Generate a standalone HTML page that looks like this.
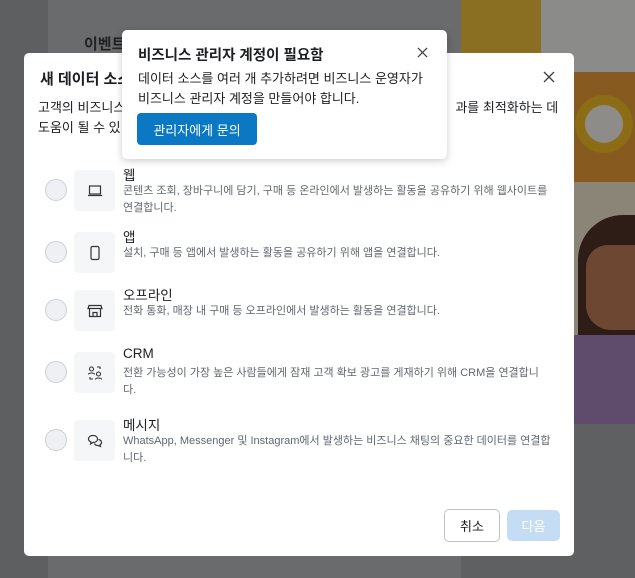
<!DOCTYPE html>
<html><head><meta charset="utf-8"><style>
*{margin:0;padding:0;box-sizing:border-box}
body{width:635px;height:578px;overflow:hidden;position:relative;background:#5f6061;font-family:"Liberation Sans","Noto Sans CJK KR",sans-serif;color:#1c1e21}
.abs{position:absolute}
.modal{left:24px;top:53px;width:550px;height:503px;background:#fff;border-radius:5px}
.pop{left:122px;top:30px;width:325px;height:129px;background:#fff;border-radius:5px;box-shadow:0 2px 8px rgba(0,0,0,.2)}
.row{position:absolute;left:0;width:550px;height:60px}
.radio{position:absolute;left:21px;top:9px;width:22px;height:22px;border-radius:50%;border:1px solid #ccd0d5;background:#eef0f4}
.ico{position:absolute;left:50px;top:0;width:41px;height:41px;background:#f5f6f7;border-radius:4px;display:flex;align-items:center;justify-content:center}
.t{position:absolute;left:99px;top:-6px;font-size:13.5px;color:#1c1e21}
.d{position:absolute;left:99px;top:13px;font-size:11px;color:#606770;line-height:17px;width:428px}
</style></head><body>
<div class="abs" style="left:0;top:0;width:48px;height:578px;background:#5e5f60"></div>
<div class="abs" style="left:48px;top:0;width:413px;height:578px;background:#6a6b6c"></div>
<div class="abs" style="left:84px;top:33px;font-size:15px;font-weight:bold;color:#222">이벤트</div>
<div class="abs" style="left:461px;top:0;width:174px;height:424px;background:#8a8577"></div>
<div class="abs" style="left:461px;top:0;width:80px;height:75px;background:#8a6f22"></div>
<div class="abs" style="left:541px;top:0;width:94px;height:72px;background:#8b8b89"></div>
<div class="abs" style="left:541px;top:72px;width:94px;height:110px;background:#875a20"></div>
<div class="abs" style="left:575px;top:95px;width:58px;height:58px;border-radius:50%;background:#8c6c14"></div>
<div class="abs" style="left:585px;top:105px;width:38px;height:38px;border-radius:50%;background:#8e8c88"></div>
<div class="abs" style="left:578px;top:215px;width:57px;height:170px;background:#2e1c16;border-radius:45px 0 0 0"></div>
<div class="abs" style="left:586px;top:245px;width:49px;height:85px;background:#6e4732;border-radius:22px 0 0 25px"></div>
<div class="abs" style="left:574px;top:335px;width:61px;height:89px;background:#5f4c6c"></div>
<div class="abs" style="left:574px;top:424px;width:61px;height:154px;background:#5e6061"></div>

<div class="abs modal">
  <div class="abs" style="left:16px;top:15px;font-size:15px;font-weight:bold">새 데이터 소스</div>
  <svg class="abs" style="left:519px;top:18px" width="12" height="12" viewBox="0 0 12 12" stroke="#444" stroke-width="1.4"><path d="M1 1l10 10M11 1L1 11"/></svg>
  <div class="abs" style="left:14px;top:45px;font-size:13px;line-height:20px;color:#1c1e21;white-space:nowrap">고객의 비즈니스<span style="display:inline-block;width:330px"></span>과를 최적화하는 데<br>도움이 될 수 있</div>
  <div class="row" style="top:117px"><div class="radio"></div><div class="ico"><svg width="16" height="14" viewBox="0 0 16 14" fill="none" stroke="#333" stroke-width="1.2"><rect x="2.5" y="2" width="11" height="8"/><path d="M1 11.5h14"/></svg></div><div class="t">웹</div><div class="d">콘텐츠 조회, 장바구니에 담기, 구매 등 온라인에서 발생하는 활동을 공유하기 위해 웹사이트를 연결합니다.</div></div>
  <div class="row" style="top:179px"><div class="radio"></div><div class="ico"><svg width="12" height="16" viewBox="0 0 12 16" fill="none" stroke="#333" stroke-width="1.2"><rect x="2" y="1.5" width="8" height="13" rx="1.5"/></svg></div><div class="t">앱</div><div class="d">설치, 구매 등 앱에서 발생하는 활동을 공유하기 위해 앱을 연결합니다.</div></div>
  <div class="row" style="top:237px"><div class="radio"></div><div class="ico"><svg width="16" height="16" viewBox="0 0 16 16" fill="none" stroke="#333" stroke-width="1.2"><path d="M2 2.5h12l1 3H1z"/><path d="M2.5 5.5v8h11v-8M6 13.5v-4h4v4"/></svg></div><div class="t">오프라인</div><div class="d">전화 통화, 매장 내 구매 등 오프라인에서 발생하는 활동을 연결합니다.</div></div>
  <div class="row" style="top:299px"><div class="radio"></div><div class="ico"><svg width="16" height="16" viewBox="0 0 16 16" fill="none" stroke="#333" stroke-width="1.1"><circle cx="4.5" cy="4" r="2"/><circle cx="11.5" cy="9" r="2"/><path d="M1.5 9.5c0-2 6-2 6 0M8.5 14.5c0-2 6-2 6 0M10 2h3v2M6 14H3v-2"/></svg></div><div class="t">CRM</div><div class="d">전환 가능성이 가장 높은 사람들에게 잠재 고객 확보 광고를 게재하기 위해 CRM을 연결합니다.</div></div>
  <div class="row" style="top:367px"><div class="radio"></div><div class="ico"><svg width="16" height="16" viewBox="0 0 16 16" fill="none" stroke="#333" stroke-width="1.2"><path d="M6 2.5c3 0 4.5 1.6 4.5 3.5S9 9.5 6 9.5l-2.5 1.5.5-2C2.5 8.3 1.5 7.2 1.5 6 1.5 4.1 3 2.5 6 2.5z"/><path d="M11.5 6.5c2 .5 3 1.6 3 3 0 1-.6 1.8-1.5 2.3l.5 1.7-2.5-1c-1.5 0-3-.8-3.5-2"/></svg></div><div class="t">메시지</div><div class="d">WhatsApp, Messenger 및 Instagram에서 발생하는 비즈니스 채팅의 중요한 데이터를 연결합니다.</div></div>
  <div class="abs" style="left:420px;top:456px;width:56px;height:33px;border:1px solid #bec3c9;border-radius:5px;font-size:13px;display:flex;align-items:center;justify-content:center">취소</div>
  <div class="abs" style="left:483px;top:457px;width:53px;height:31px;background:#c5ddf4;border-radius:5px;font-size:13px;color:#fff;display:flex;align-items:center;justify-content:center">다음</div>
</div>

<div class="abs pop">
  <div class="abs" style="left:16px;top:14px;font-size:14.5px;font-weight:bold">비즈니스 관리자 계정이 필요함</div>
  <svg class="abs" style="left:295px;top:17px" width="11" height="11" viewBox="0 0 12 12" stroke="#444" stroke-width="1.4"><path d="M1 1l10 10M11 1L1 11"/></svg>
  <div class="abs" style="left:16px;top:39px;font-size:13px;line-height:20px;color:#1c1e21">데이터 소스를 여러 개 추가하려면 비즈니스 운영자가<br>비즈니스 관리자 계정을 만들어야 합니다.</div>
  <div class="abs" style="left:15px;top:83px;width:120px;height:32px;background:#0a78c2;border-radius:4px;color:#fff;font-size:13px;display:flex;align-items:center;justify-content:center">관리자에게 문의</div>
</div>
</body></html>
